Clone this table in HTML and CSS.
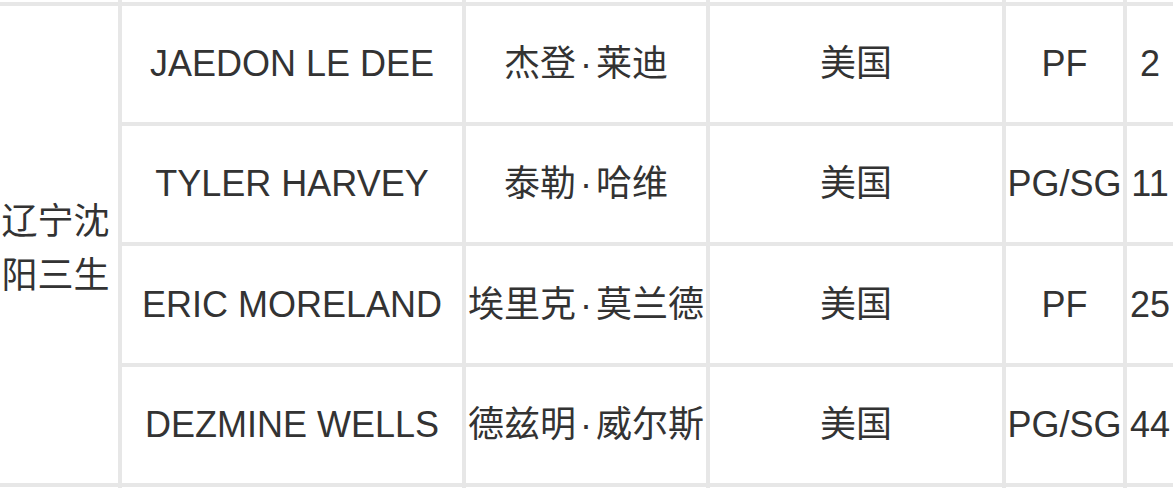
FILE: index.html
```html
<!DOCTYPE html>
<html lang="zh-CN">
<head>
<meta charset="utf-8">
<title>外援名单</title>
<link rel="stylesheet" href="styles.css">
</head>
<body>
<div class="roster">
  <div class="cell edge"></div><div class="cell edge"></div><div class="cell edge"></div><div class="cell edge"></div><div class="cell edge"></div><div class="cell edge"></div>

  <div class="cell team">辽宁沈阳三生</div>

  <div class="cell">JAEDON LE DEE</div>
  <div class="cell">杰登<span class="dot">·</span>莱迪</div>
  <div class="cell">美国</div>
  <div class="cell">PF</div>
  <div class="cell">2</div>

  <div class="cell">TYLER HARVEY</div>
  <div class="cell">泰勒<span class="dot">·</span>哈维</div>
  <div class="cell">美国</div>
  <div class="cell">PG/SG</div>
  <div class="cell">11</div>

  <div class="cell">ERIC MORELAND</div>
  <div class="cell">埃里克<span class="dot">·</span>莫兰德</div>
  <div class="cell">美国</div>
  <div class="cell">PF</div>
  <div class="cell">25</div>

  <div class="cell">DEZMINE WELLS</div>
  <div class="cell">德兹明<span class="dot">·</span>威尔斯</div>
  <div class="cell">美国</div>
  <div class="cell">PG/SG</div>
  <div class="cell">44</div>

  <div class="cell edge"></div><div class="cell edge"></div><div class="cell edge"></div><div class="cell edge"></div><div class="cell edge"></div><div class="cell edge"></div>
</div>
</body>
</html>
```

FILE: styles.css
```css
html, body {
  margin: 0;
  padding: 0;
  background: #ffffff;
  overflow: hidden;
}

body {
  width: 1173px;
  height: 488px;
}

.roster {
  display: grid;
  grid-template-columns: 125px 340px 240px 292px 117px 46px;
  grid-template-rows: 2px 116px 116px 117px 116px 1px;
  gap: 4px;
  background: #e7e7e7;
  margin-left: -7px;
  width: max-content;
  font-family: "Liberation Sans", "Noto Sans CJK SC", sans-serif;
  font-size: 36px;
  color: #333333;
}

.cell {
  background: #ffffff;
  display: flex;
  align-items: center;
  justify-content: center;
  text-align: center;
  white-space: nowrap;
  line-height: 1;
}

.cell.edge {
  min-height: 0;
}

.team {
  grid-row: 2 / span 4;
  white-space: normal;
  line-height: 54px;
  font-family: "Noto Sans CJK SC", sans-serif;
}

.dot {
  margin: 0 4px;
}
```
